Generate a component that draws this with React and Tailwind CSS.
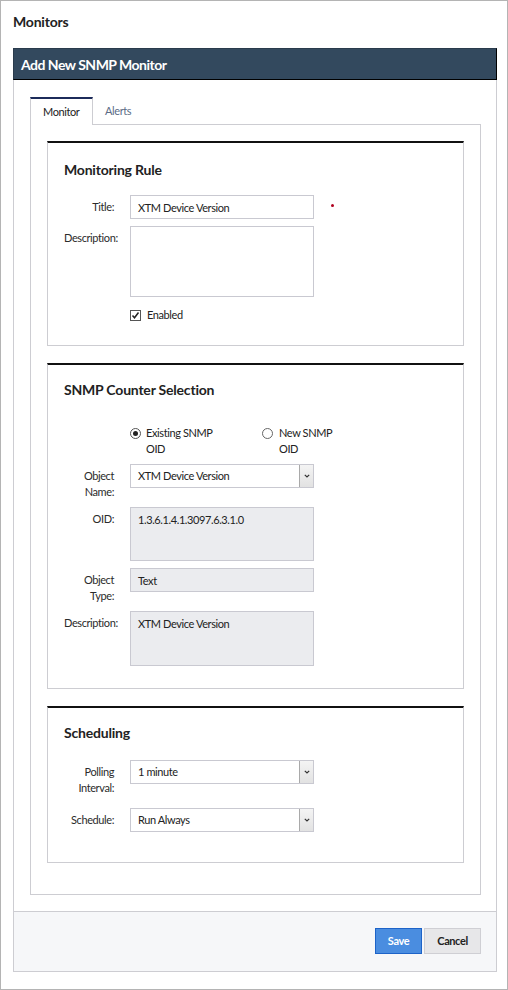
import React from 'react';

function Chevron() {
    return (
        <svg width="6" height="4" viewBox="0 0 6 4">
            <path d="M0.8 0.8 L3 3 L5.2 0.8" fill="none" stroke="#333" strokeWidth="1.2" />
        </svg>
    );
}

function Label({ children }) {
    return (
        <div className="w-[50px] shrink-0 pt-[4px] text-right text-[11px] leading-[16px] text-[#2b2b2b] whitespace-pre-line">
            {children}
        </div>
    );
}

function TextBox({ value, h = 'h-[24px]', readOnly }) {
    return (
        <div
            className={`w-[184px] ${h} border border-[#c9c9d1] px-[7px] pt-[4px] text-[11px] leading-[16px] text-[#222] ${
                readOnly ? 'bg-[#ebecef]' : 'bg-white'
            }`}
        >
            {value}
        </div>
    );
}

function Select({ value }) {
    return (
        <div className="flex w-[184px] h-[24px] border border-[#c9c9d1] bg-white">
            <div className="flex-1 px-[7px] pt-[3px] text-[11px] leading-[16px] text-[#222]">{value}</div>
            <div className="w-[14px] h-full flex items-center justify-center border-l border-[#a9a9a9] bg-gradient-to-b from-[#f4f4f4] to-[#e2e2e2]">
                <Chevron />
            </div>
        </div>
    );
}

function Row({ label, children, className = '' }) {
    return (
        <div className={`flex gap-4 ${className}`}>
            <Label>{label}</Label>
            {children}
        </div>
    );
}

function Card({ title, children, className = '' }) {
    return (
        <div className={`border border-[#cdcdd2] border-t-2 border-t-[#111] px-4 ${className}`}>
            <div className="h-[18px] text-[14px] leading-[18px] font-bold tracking-[-0.2px] text-[#222]">{title}</div>
            {children}
        </div>
    );
}

export default function App() {
    return (
        <div className="w-[508px] h-[990px] border border-[#b4b4b4] bg-white font-['Lato',sans-serif] tracking-[-0.4px] text-[#222]">
            {/* Page title */}
            <div className="h-[47px] pl-3 pt-[12px] text-[14px] font-bold leading-[18px] tracking-[-0.2px]">Monitors</div>

            <div className="ml-3 w-[484px]">
                {/* Header bar */}
                <div className="h-[32px] bg-[#33495e] border border-[#2a3b4c] border-r-black border-b-black pl-[7px] flex items-center">
                    <span className="text-white text-[14px] font-bold tracking-[-0.5px]">Add New SNMP Monitor</span>
                </div>

                <div className="border-x border-[#cdcdd2] px-4 pt-[17px] pb-4">
                    {/* Tabs */}
                    <div className="flex items-end h-[27px]">
                        <div className="relative z-10 -mb-px h-[28px] w-[63px] border-x border-[#cdcdd2] border-t-2 border-t-[#1c2b5a] bg-white pl-3 pt-[5px] text-[11px] leading-[16px] text-[#222]">
                            Monitor
                        </div>
                        <div className="h-[27px] pl-3 pt-[6px] text-[11px] leading-[16px] text-[#5b6b86]">Alerts</div>
                    </div>

                    {/* Tab panel */}
                    <div className="w-[451px] border border-[#cdcdd2] px-4 pt-4 pb-[31px]">
                        <Card title="Monitoring Rule" className="pt-[18px] pb-[22px]">
                            <Row label="Title:" className="mt-4">
                                <TextBox value="XTM Device Version" />
                                <span className="ml-[1px] mt-[9px] w-[3px] h-[3px] rounded-full bg-[#b0001e]" />
                            </Row>
                            <Row label="Description:" className="mt-[7px]">
                                <TextBox value="" h="h-[71px]" />
                            </Row>
                            <div className="mt-[10px] ml-[66px] flex items-center gap-[6px] h-[16px]">
                                <span className="w-[11px] h-[11px] border border-[#555] bg-white flex items-center justify-center">
                                    <svg width="9" height="9" viewBox="0 0 9 9">
                                        <path d="M1.5 4.5 L3.5 6.8 L7.5 1.5" fill="none" stroke="#222" strokeWidth="1.5" />
                                    </svg>
                                </span>
                                <span className="text-[11px] leading-[16px]">Enabled</span>
                            </div>
                        </Card>

                        <Card title="SNMP Counter Selection" className="mt-[17px] pt-4 pb-[22px]">
                            <div className="mt-[26px] ml-[66px] flex text-[11px] leading-[16px]">
                                <div className="w-[132px] flex gap-[5px]">
                                    <span className="mt-[3px] w-[11px] h-[11px] rounded-full border border-[#555] flex items-center justify-center">
                                        <span className="w-[5px] h-[5px] rounded-full bg-[#222]" />
                                    </span>
                                    <span className="w-[76px]">Existing SNMP OID</span>
                                </div>
                                <div className="flex gap-[6px]">
                                    <span className="mt-[3px] w-[11px] h-[11px] rounded-full border border-[#666] bg-white" />
                                    <span className="w-[60px]">New SNMP OID</span>
                                </div>
                            </div>
                            <Row label={'Object\nName:'} className="mt-[7px]">
                                <Select value="XTM Device Version" />
                            </Row>
                            <Row label="OID:" className="mt-[7px]">
                                <TextBox value="1.3.6.1.4.1.3097.6.3.1.0" h="h-[54px]" readOnly />
                            </Row>
                            <Row label={'Object\nType:'} className="mt-[7px]">
                                <TextBox value="Text" readOnly />
                            </Row>
                            <Row label="Description:" className="mt-[7px]">
                                <TextBox value="XTM Device Version" h="h-[55px]" readOnly />
                            </Row>
                        </Card>

                        <Card title="Scheduling" className="mt-[17px] pt-4 pb-[30px]">
                            <Row label={'Polling\nInterval:'} className="mt-[18px]">
                                <Select value="1 minute" />
                            </Row>
                            <Row label="Schedule:" className="mt-[12px]">
                                <Select value="Run Always" />
                            </Row>
                        </Card>
                    </div>
                </div>

                {/* Footer */}
                <div className="h-[61px] border border-[#cdcdd2] bg-[#f6f7f9] flex justify-end items-start gap-[2px] pt-4 pr-[15px]">
                    <button className="w-[47px] h-[26px] border border-[#1d63c8] bg-[#4a8de0] text-white text-[11px] font-bold">
                        Save
                    </button>
                    <button className="w-[57px] h-[26px] border border-[#cfcfd4] bg-[#e7e7e9] text-[#222] text-[11px] font-bold">
                        Cancel
                    </button>
                </div>
            </div>
        </div>
    );
}
